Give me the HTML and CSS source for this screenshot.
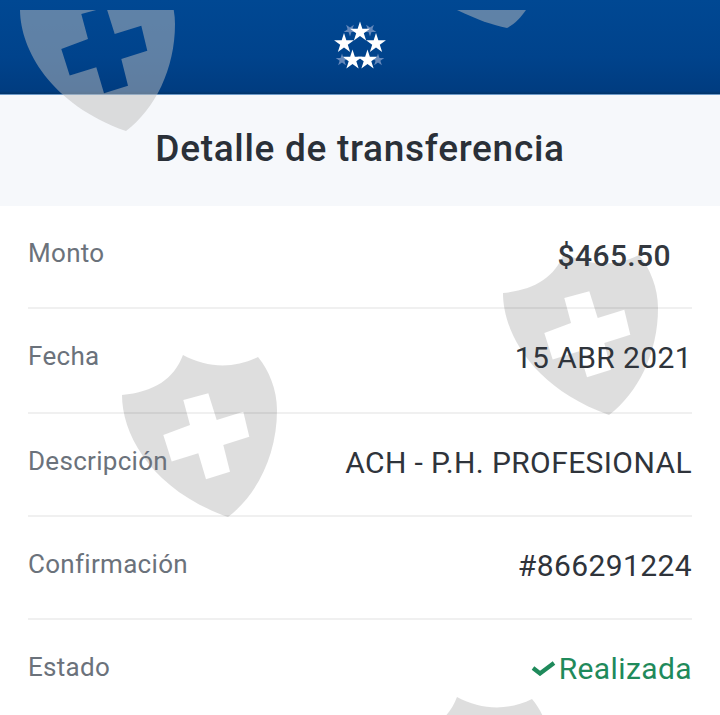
FILE: index.html
```html
<!DOCTYPE html>
<html lang="es">
<head>
<meta charset="utf-8">
<title>Detalle de transferencia</title>
<link rel="stylesheet" href="styles.css">
</head>
<body>
<div class="page">
  <header class="topbar">
    <svg class="logo" viewBox="0 0 52 52" width="52" height="52" aria-hidden="true">
      <defs>
        <polygon id="star" points="0,-11 2.47,-3.4 10.46,-3.4 4,1.3 6.47,8.9 0,4.2 -6.47,8.9 -4,1.3 -10.46,-3.4 -2.47,-3.4"/>
      </defs>
      <g class="logo-faint">
        <use href="#star" transform="translate(16,9) rotate(36) scale(.6)"/>
        <use href="#star" transform="translate(36,9) rotate(-36) scale(.6)"/>
        <use href="#star" transform="translate(8,39) rotate(-72) scale(.6)"/>
        <use href="#star" transform="translate(44,39) rotate(72) scale(.6)"/>
      </g>
      <g class="logo-main">
        <use href="#star" transform="translate(26,11) scale(.95)"/>
        <use href="#star" transform="translate(10,22.5) scale(.95)"/>
        <use href="#star" transform="translate(42,22.5) scale(.95)"/>
        <use href="#star" transform="translate(18.5,39) scale(.95)"/>
        <use href="#star" transform="translate(33.5,39) scale(.95)"/>
      </g>
    </svg>
  </header>
  <section class="titleband">
    <h1 class="title">Detalle de transferencia</h1>
  </section>
  <main class="details">
    <div class="row row-first">
      <span class="label label-first">Monto</span>
      <span class="value value-amount">$465.50</span>
    </div>
    <div class="row row-tall">
      <span class="label">Fecha</span>
      <span class="value">15 ABR 2021</span>
    </div>
    <div class="row">
      <span class="label">Descripción</span>
      <span class="value">ACH - P.H. PROFESIONAL</span>
    </div>
    <div class="row">
      <span class="label">Confirmación</span>
      <span class="value">#866291224</span>
    </div>
    <div class="row row-last">
      <span class="label">Estado</span>
      <span class="value value-ok">
        <svg class="check" viewBox="0 0 25 15" width="25" height="15" aria-hidden="true"><path d="M2 7 L9 12.5 L23 2" fill="none" stroke="currentColor" stroke-width="4.2"/></svg>Realizada
      </span>
    </div>
  </main>
  <svg class="watermark" viewBox="0 0 720 705" width="720" height="705" aria-hidden="true">
    <defs>
      <path id="shield" fill-rule="evenodd" d="M61 0 C52 24 32 37 0 40 C0 80 30 135 106 162 C135 140 155 100 155 55 C155 35 147 15 136 2 C112 14 85 13 61 0 Z M61.3 45 L86.3 38.3 L94.7 65 L121.3 56.7 L127.3 81.7 L101.3 90 L108 116.7 L84 124.3 L76.3 98.3 L49.7 106.5 L41.3 80 L68 70 Z"/>
    </defs>
    <use href="#shield" x="20" y="-41"/>
    <path d="M457 0 C478 10 492 15 507 18 C515 14 521 7 526 0 Z"/>
    <use href="#shield" x="503" y="243"/>
    <use href="#shield" x="122" y="345"/>
    <use href="#shield" x="396" y="687"/>
  </svg>
</div>
</body>
</html>
```
FILE: styles.css
```css
html, body {
  margin: 0;
  padding: 0;
  background: #ffffff;
}
.page {
  position: relative;
  width: 720px;
  height: 715px;
  overflow: hidden;
  font-family: Roboto, "Liberation Sans", sans-serif;
}
.topbar {
  height: 95px;
  box-sizing: border-box;
  display: flex;
  justify-content: center;
  align-items: flex-start;
  padding-top: 21px;
  background: linear-gradient(180deg, #004893 0%, #00438c 60%, #003c80 97%, #023468 100%);
  border-bottom: 1px solid #6d9ac8;
}
.logo-main { fill: #ffffff; }
.logo-faint { fill: #6488bb; }
.titleband {
  height: 111px;
  box-sizing: border-box;
  padding-bottom: 4px;
  background: #f6f8fb;
  display: flex;
  align-items: center;
  justify-content: center;
}
.title {
  margin: 0;
  font-size: 37px;
  font-weight: 500;
  letter-spacing: 0.7px;
  color: #2a3038;
}
.details {
  position: relative;
  z-index: 1;
  display: flex;
  flex-direction: column;
  padding: 0 28px;
}
.row {
  height: 103px;
  box-sizing: border-box;
  padding-bottom: 4px;
  border-bottom: 2px solid rgba(0, 0, 0, 0.06);
  display: flex;
  justify-content: space-between;
  align-items: center;
  font-size: 30px;
}
.row-first { padding-bottom: 2px; }
.row-tall { height: 105px; padding-bottom: 6px; }
.row-last { border-bottom: 0; padding-bottom: 6px; }
.label {
  font-size: 26px;
  color: #6b727b;
  letter-spacing: 0.3px;
  position: relative;
  top: -2px;
}
.label-first { top: -3px; }
.value {
  color: #2f343b;
  letter-spacing: 0.4px;
}
.value-amount {
  font-weight: 500;
  margin-right: 21px;
  color: #33383f;
}
.value-ok {
  color: #1f8a5b;
  display: flex;
  align-items: center;
  gap: 3px;
}
.check { flex: none; }
.watermark {
  position: absolute;
  left: 0;
  top: 10px;
  fill: rgba(190, 190, 190, 0.5);
  pointer-events: none;
}
```
